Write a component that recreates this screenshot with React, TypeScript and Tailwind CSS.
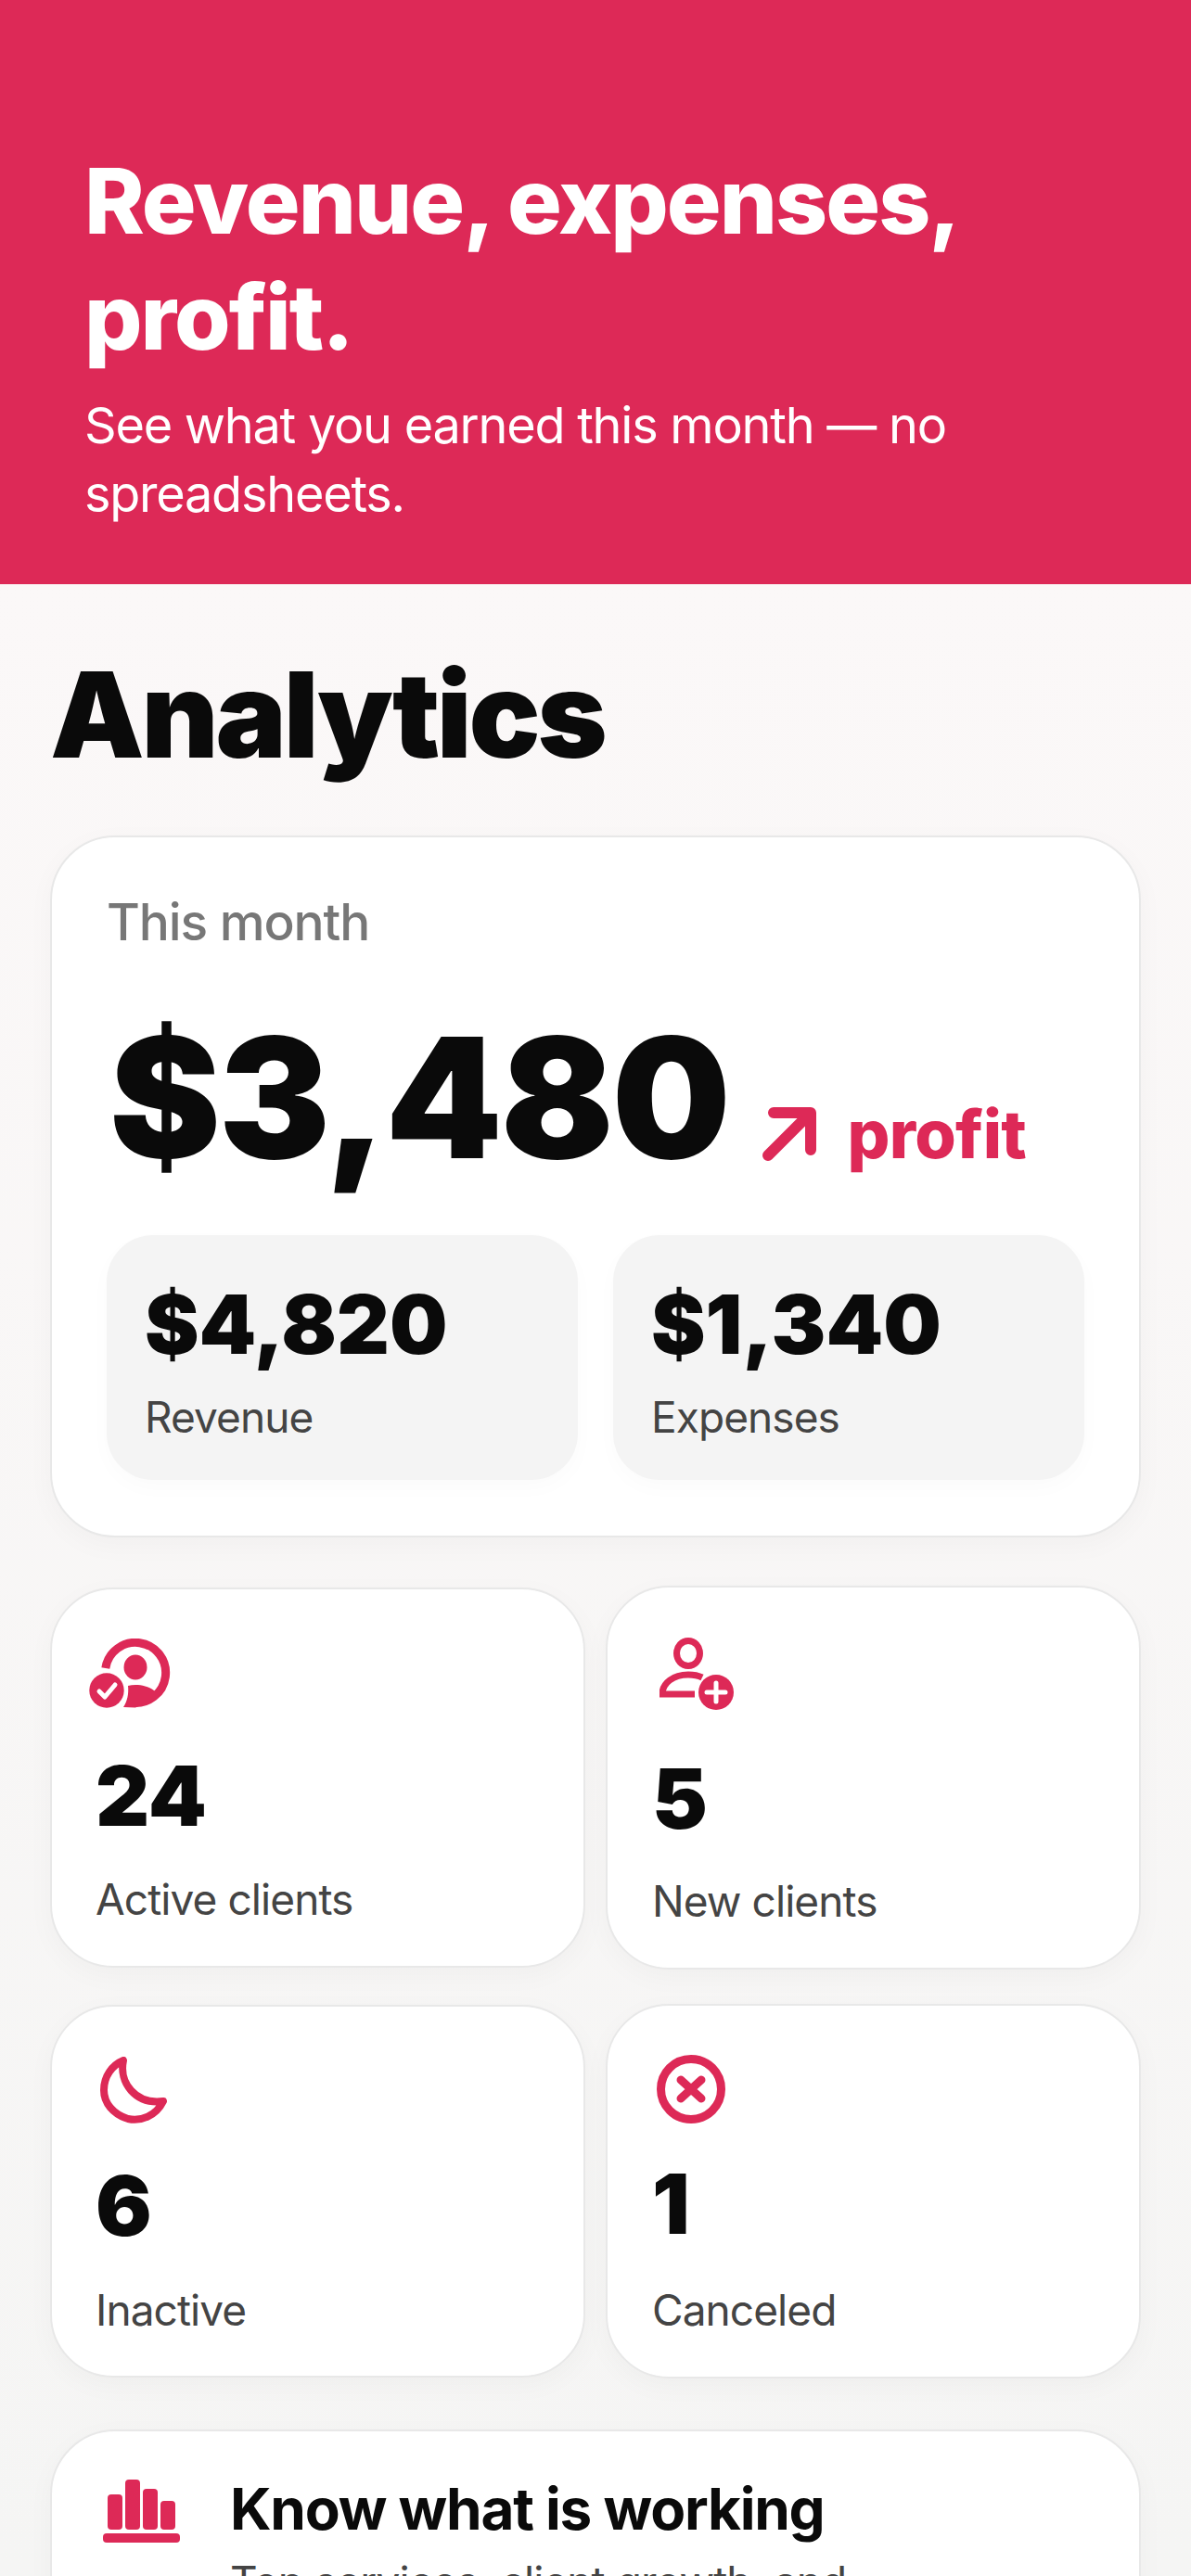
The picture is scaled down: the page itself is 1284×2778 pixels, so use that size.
const font = "font-['Inter',sans-serif]";

const ClientCheckIcon = () => (
    <svg width="88" height="76" viewBox="0 0 88 76" className="block">
        <path d="M17.8 32A32.6 32.6 0 1 1 46 69.3" fill="none" stroke="#dd2957" strokeWidth="9" />
        <ellipse cx="50" cy="31" rx="12.5" ry="13.5" fill="#dd2957" />
        <path d="M42 51C50 49 62 50 70 56L70 66L50 74.5L37 74C41 68 43 60 42 51Z" fill="#dd2957" />
        <circle cx="19" cy="56" r="18.7" fill="#dd2957" />
        <path d="M11 57l6 6 11-13" fill="none" stroke="#fff" strokeWidth="5" strokeLinecap="round" strokeLinejoin="round" />
    </svg>
);

const UserPlusIcon = () => (
    <svg width="82" height="78" viewBox="0 0 82 78" className="block">
        <ellipse cx="31" cy="17" rx="12.5" ry="13.5" fill="none" stroke="#dd2957" strokeWidth="7" />
        <path d="M46 43c-4-2-9-3-15-3C15 40 3 49 3 61h35" fill="none" stroke="#dd2957" strokeWidth="7" />
        <circle cx="61" cy="59" r="19" fill="#dd2957" />
        <path d="M61 49v20M51 59h20" stroke="#fff" strokeWidth="5" strokeLinecap="round" />
    </svg>
);

const MoonIcon = () => (
    <svg width="72" height="72" viewBox="0 0 72 72" className="block">
        <path d="M25 4C20 28 38 52 68 48C60 64 44 70 30 67C14 62 4 50 4 36C4 21 13 9 25 4Z" fill="none" stroke="#dd2957" strokeWidth="8" strokeLinejoin="round" />
    </svg>
);

const CancelIcon = () => (
    <svg width="74" height="74" viewBox="0 0 74 74" className="block">
        <circle cx="37" cy="37" r="32.5" fill="none" stroke="#dd2957" strokeWidth="9" />
        <path d="M26 27l22 20M48 27L26 47" stroke="#dd2957" strokeWidth="9" strokeLinecap="round" />
    </svg>
);

const BarsIcon = () => (
    <svg width="84" height="68" viewBox="0 0 84 68" className="block">
        <rect x="5" y="16" width="16" height="38" rx="4" fill="#dd2957" />
        <rect x="24" y="0" width="16" height="54" rx="4" fill="#dd2957" />
        <rect x="43" y="10" width="16" height="44" rx="4" fill="#dd2957" />
        <rect x="62" y="23" width="16" height="31" rx="4" fill="#dd2957" />
        <rect x="0" y="58" width="83" height="10" rx="4" fill="#dd2957" />
    </svg>
);

const StatCard = ({ icon, value, label, className, iconClass, valueClass, labelClass }: {
    icon: React.ReactNode;
    value: string;
    label: string;
    className: string;
    iconClass: string;
    valueClass: string;
    labelClass: string;
}) => (
    <div className={`bg-white border-2 border-[#e8e8e8] rounded-[68px] shadow-[0_8px_30px_rgba(0,0,0,0.03)] ${className}`}>
        <div className={iconClass}>{icon}</div>
        <div className={`text-[#0a0a0a] font-black text-[90px] leading-[90px] ${valueClass}`}>{value}</div>
        <div className={`text-[#444444] text-[46px] leading-[56px] tracking-[-0.02em] ${labelClass}`}>{label}</div>
    </div>
);

export default function App() {
    return (
        <div className={`${font} w-[1284px] h-[2778px] overflow-hidden`}>
            <header className="bg-[#dd2957] h-[630px] pt-[154px] px-[91px] text-white">
                <h1 className="font-extrabold text-[98px] leading-[125px] tracking-[-0.02em]">Revenue, expenses, profit.</h1>
                <p className="text-[54px] leading-[74px] tracking-[-0.023em] mt-[18px]">See what you earned this month — no spreadsheets.</p>
            </header>

            <main className="h-[2148px] px-[54px] pt-[63px] bg-gradient-to-b from-[#fbf8f8] to-[#f5f5f4]">
                <h2 className="font-black text-[128px] leading-[156px] tracking-[-0.025em] text-[#0a0a0a]">Analytics</h2>

                <section className="bg-white border-2 border-[#e8e8e8] rounded-[70px] h-[757px] mt-[52px] px-[59px] pt-[58px] shadow-[0_8px_30px_rgba(0,0,0,0.03)]">
                    <div className="text-[55px] leading-[66px] font-medium text-[#777777] tracking-[-0.02em]">This month</div>
                    <div className="flex items-baseline mt-[72px] h-[170px] pl-[3px]">
                        <span className="font-black text-[180px] leading-[170px] tracking-[-0.012em] text-[#0a0a0a]">$3,480</span>
                        <svg width="58" height="58" viewBox="0 0 58 58" className="ml-[36px] translate-y-[3px]">
                            <path d="M6 52L52 6M12 6h40v40" fill="none" stroke="#dd2957" strokeWidth="12" strokeLinecap="round" strokeLinejoin="round" />
                        </svg>
                        <span className="font-extrabold text-[72px] leading-[72px] tracking-[-0.01em] text-[#dd2957] ml-[34px]">profit</span>
                    </div>
                    <div className="grid grid-cols-2 gap-[38px] mt-[63px]">
                        <div className="bg-[#f4f4f4] rounded-[50px] h-[264px] pl-[41px] pt-[48px] shadow-[0_8px_24px_rgba(0,0,0,0.02)]">
                            <div className="font-black text-[88px] leading-[96px] text-[#0a0a0a]">$4,820</div>
                            <div className="text-[46px] leading-[56px] tracking-[-0.02em] text-[#444444] mt-[24px]">Revenue</div>
                        </div>
                        <div className="bg-[#f4f4f4] rounded-[50px] h-[264px] pl-[41px] pt-[48px] shadow-[0_8px_24px_rgba(0,0,0,0.02)]">
                            <div className="font-black text-[88px] leading-[96px] text-[#0a0a0a]">$1,340</div>
                            <div className="text-[46px] leading-[56px] tracking-[-0.02em] text-[#444444] mt-[24px]">Expenses</div>
                        </div>
                    </div>
                </section>

                <div className="grid grid-cols-2 gap-x-[22px] gap-y-[37px] items-center mt-[52px]">
                    <StatCard
                        icon={<ClientCheckIcon />}
                        value="24"
                        label="Active clients"
                        className="h-[410px] pl-[47px] pt-[53px]"
                        iconClass="ml-[-7px]"
                        valueClass="mt-[49px]"
                        labelClass="mt-[38px]"
                    />
                    <StatCard
                        icon={<UserPlusIcon />}
                        value="5"
                        label="New clients"
                        className="h-[414px] pl-[48px] pt-[54px]"
                        iconClass="ml-[8px]"
                        valueClass="mt-[51px]"
                        labelClass="mt-[37px]"
                    />
                    <StatCard
                        icon={<MoonIcon />}
                        value="6"
                        label="Inactive"
                        className="h-[402px] pl-[47px] pt-[54px]"
                        iconClass="ml-[5px]"
                        valueClass="mt-[44px]"
                        labelClass="mt-[39px]"
                    />
                    <StatCard
                        icon={<CancelIcon />}
                        value="1"
                        label="Canceled"
                        className="h-[404px] pl-[48px] pt-[53px]"
                        iconClass="ml-[5px]"
                        valueClass="mt-[42px]"
                        labelClass="mt-[41px]"
                    />
                </div>

                <section className="bg-white border-2 border-[#e8e8e8] rounded-[70px] mt-[55px] h-[400px] flex pl-[55px] pt-[52px] shadow-[0_8px_30px_rgba(0,0,0,0.03)]">
                    <BarsIcon />
                    <div className="ml-[53px] mt-[-6px]">
                        <div className="font-bold text-[62px] leading-[76px] tracking-[-0.02em] text-[#0a0a0a]">Know what is working</div>
                        <div className="text-[46px] leading-[60px] tracking-[-0.02em] text-[#444444] mt-[10px]">Top services, client growth, and</div>
                    </div>
                </section>
            </main>
        </div>
    );
}
